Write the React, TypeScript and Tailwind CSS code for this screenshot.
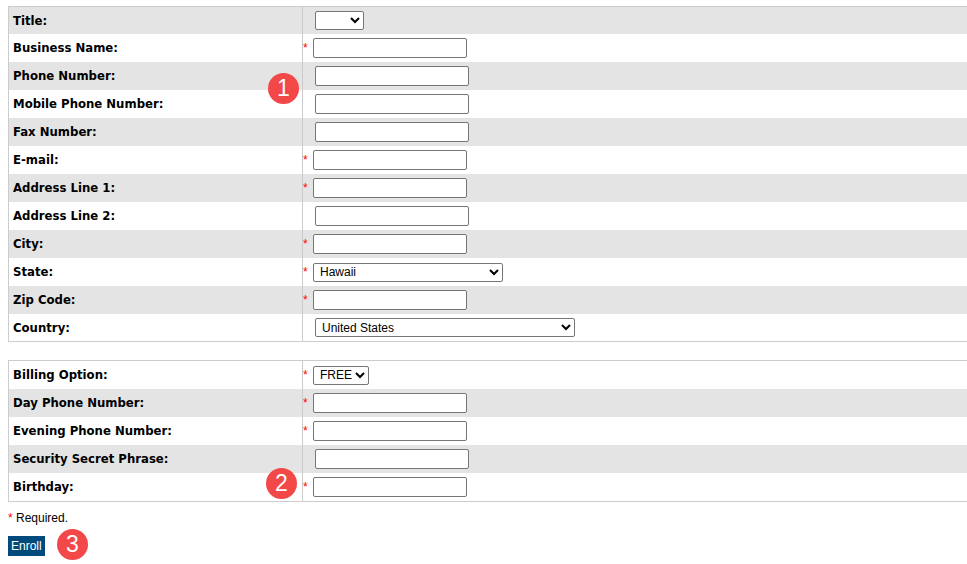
import React from "react";

type Field = { label: string; req?: boolean; kind: "input" | "select"; w?: number; value?: string };

const table1: Field[] = [
  { label: "Title:", kind: "select", w: 49, value: "" },
  { label: "Business Name:", req: true, kind: "input" },
  { label: "Phone Number:", kind: "input" },
  { label: "Mobile Phone Number:", kind: "input" },
  { label: "Fax Number:", kind: "input" },
  { label: "E-mail:", req: true, kind: "input" },
  { label: "Address Line 1:", req: true, kind: "input" },
  { label: "Address Line 2:", kind: "input" },
  { label: "City:", req: true, kind: "input" },
  { label: "State:", req: true, kind: "select", w: 190, value: "Hawaii" },
  { label: "Zip Code:", req: true, kind: "input" },
  { label: "Country:", kind: "select", w: 260, value: "United States" },
];

const table2: Field[] = [
  { label: "Billing Option:", req: true, kind: "select", w: 56, value: "FREE" },
  { label: "Day Phone Number:", req: true, kind: "input" },
  { label: "Evening Phone Number:", req: true, kind: "input" },
  { label: "Security Secret Phrase:", kind: "input" },
  { label: "Birthday:", req: true, kind: "input" },
];

function Row({ f, gray, short }: { f: Field; gray: boolean; short?: boolean }) {
  const bg = gray ? "bg-[#e4e4e4]" : "bg-white";
  const h = short ? "h-[27px]" : "h-[28px]";
  return (
    <div className={`flex ${h} ${bg}`}>
      <div className="w-[294px] flex items-center pl-[4px] border-r border-[#cccccc] text-[13px] font-bold text-black [font-family:'DejaVu_Sans_Condensed','DejaVu_Sans',sans-serif]">
        {f.label}
      </div>
      <div className="flex items-center">
        {f.req ? (
          <span className="w-[10px] text-[12px] text-[#ff0000] leading-none [font-family:'Liberation_Sans',Arial,sans-serif]">*</span>
        ) : (
          <span className="w-[12px]" />
        )}
        {f.kind === "input" ? (
          <input
            type="text"
            className="h-[20px] w-[154px] border border-[#767676] rounded-[2px] bg-white"
          />
        ) : (
          <select
            defaultValue={f.value}
            style={{ width: f.w }}
            className="h-[19px] border border-[#767676] rounded-[2px] bg-white text-[12px] text-black pl-[2px] [font-family:'Liberation_Sans',Arial,sans-serif]"
          >
            <option value={f.value}>{f.value}</option>
          </select>
        )}
      </div>
    </div>
  );
}

function Badge({ n }: { n: string }) {
  return (
    <div className="w-[31px] h-[31px] rounded-full bg-[#f24848] text-white flex items-center justify-center text-[23px] leading-none [font-family:'Liberation_Sans',Arial,sans-serif]">
      {n}
    </div>
  );
}

export default function App() {
  return (
    <div className="relative w-[967px] h-[564px] overflow-hidden bg-white">
      <div className="pt-[6px] pl-[8px]">
        <div className="w-[1000px] border-t border-l border-b border-[#cccccc]">
          {table1.map((f, i) => (
            <Row key={f.label} f={f} gray={i % 2 === 0} short={i === 0 || i === table1.length - 1} />
          ))}
        </div>
        <div className="h-[18px]" />
        <div className="w-[1000px] border-t border-l border-b border-[#cccccc]">
          {table2.map((f, i) => (
            <Row key={f.label} f={f} gray={i % 2 === 1} />
          ))}
        </div>
        <div className="mt-[9px] h-[14px] leading-[14px] text-[12px] text-black [font-family:'Liberation_Sans',Arial,sans-serif]">
          <span className="text-[#ff0000]">*</span> Required.
        </div>
        <div className="mt-[11px] flex items-center">
          <button className="h-[20px] px-[3px] bg-[#004a7c] text-white text-[12px] leading-[20px] [font-family:'Liberation_Sans',Arial,sans-serif]">
            Enroll
          </button>
        </div>
      </div>
      <div className="absolute left-[268px] top-[73px]">
        <Badge n="1" />
      </div>
      <div className="absolute left-[266px] top-[468px]">
        <Badge n="2" />
      </div>
      <div className="absolute left-[57px] top-[529px]">
        <Badge n="3" />
      </div>
    </div>
  );
}
